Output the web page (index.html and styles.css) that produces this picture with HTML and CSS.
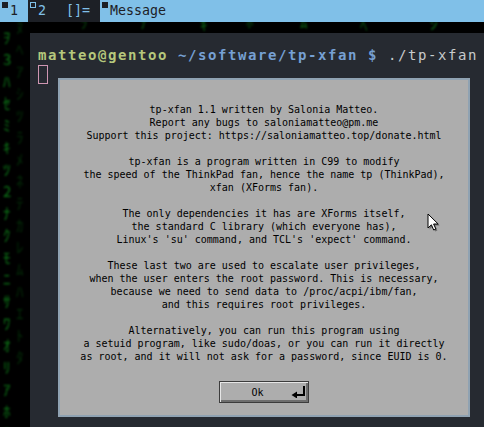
FILE: index.html
```html
<!DOCTYPE html>
<html>
<head>
<meta charset="utf-8">
<title>tp-xfan</title>
<link rel="stylesheet" href="styles.css">
</head>
<body>
<div class="bar">
  <div class="tag sel"><span class="ind fill"></span>1</div>
  <div class="tag"><span class="ind hollow"></span>2</div>
  <div class="layout">[]=</div>
  <div class="title"><span class="ind fill"></span>Message</div>
</div>
<div class="desk">
  <div class="matrix" aria-hidden="true">
    <span class="g g1">ｦ<br>3<br>ﾊ<br>ｾ<br>ﾐ<br>ｷ<br>ﾂ<br>2<br>ﾅ<br>ｸ<br>ﾓ<br>ﾆ<br>ｻ<br>ﾜ<br>ｵ<br>ﾘ<br>ｱ<br>ﾎ<br>ﾃ<br>ﾏ</span>
    <span class="g g2">ﾇ<br>ﾍ<br>ｱ<br>ｼ<br>ﾂ<br>ﾗ<br>ﾒ<br>ﾈ<br>ﾃ<br>ｶ<br>ﾚ<br>ﾑ<br>ﾊ<br>ｴ<br>ﾄ<br>ﾀ</span>
    <span class="g g3">ﾅ</span>
    <span class="g g4">ｷ</span>
    <span class="g g5">ﾑ</span>
    <span class="g g6">ﾍ</span>
    <span class="g g7">ｼ</span>
    <span class="g g8">ﾗ</span>
    <span class="g g9">ﾎ</span>
  </div>
  <div class="term">
    <div class="line"><span class="user">matteo@gentoo</span> <span class="path">~/software/tp-xfan $</span> <span class="cmd">./tp-xfan</span></div>
    <div class="line"><span class="cursor"></span></div>
  </div>
  <div class="dialog">
    <div class="msg">tp-xfan 1.1 written by Salonia Matteo.
Report any bugs to saloniamatteo@pm.me
Support this project: https://saloniamatteo.top/donate.html

tp-xfan is a program written in C99 to modify
the speed of the ThinkPad fan, hence the name tp (ThinkPad),
xfan (XForms fan).

The only dependencies it has are XForms itself,
the standard C library (which everyone has),
Linux's 'su' command, and TCL's 'expect' command.

These last two are used to escalate user privileges,
when the user enters the root password. This is necessary,
because we need to send data to /proc/acpi/ibm/fan,
and this requires root privileges.

Alternatively, you can run this program using
a setuid program, like sudo/doas, or you can run it directly
as root, and it will not ask for a password, since EUID is 0.</div>
    <div class="btnrow">
      <div class="btn"><span class="lbl">Ok</span><svg class="ret" width="15" height="12" viewBox="0 0 15 12"><path d="M12 0h2v10H6v2.5L0.5 9L6 5.5V8h6z" fill="#000"/></svg></div>
    </div>
  </div>
  <svg class="pointer" width="13" height="19" viewBox="0 0 13 19">
    <path d="M1.5 1.5v14l3.4-3.2 2.3 5.2 2.2-1-2.3-5h4.6z" fill="#3a3a3a" opacity="0.55" transform="translate(1 1)"/>
    <path d="M1 1v14l3.4-3.2 2.3 5.2 2.2-1-2.3-5h4.6z" fill="#fff" stroke="#000" stroke-width="1" stroke-linejoin="miter"/>
  </svg>
</div>
</body>
</html>
```

FILE: styles.css
```css
* { box-sizing: border-box; }
html, body { margin: 0; padding: 0; }
body {
  width: 484px;
  height: 427px;
  overflow: hidden;
  background: #000;
  font-family: "DejaVu Sans Mono", monospace;
}

.bar {
  display: flex;
  height: 22px;
  background: #80c0e8;
  font-size: 13.3px;
  line-height: 22px;
  color: #1d2026;
}
.tag, .layout, .title {
  position: relative;
  padding: 0 10px;
  white-space: pre;
}
.tag { background: #1d2026; color: #80c0e8; }
.tag.sel { background: #80c0e8; color: #1d2026; }
.layout { background: #1d2026; color: #80c0e8; }
.title { flex: 1; background: #80c0e8; color: #1d2026; }
.ind {
  position: absolute;
  left: 2px;
  top: 2px;
  width: 6px;
  height: 6px;
}
.tag.sel .ind.fill, .title .ind.fill { background: #1d2026; }
.ind.hollow { border: 1px solid #80c0e8; }

.desk {
  position: relative;
  height: 405px;
  padding: 11px 0 0 30px;
}
.matrix {
  position: absolute;
  inset: 0;
  overflow: hidden;
  font-family: "Noto Sans CJK JP", monospace;
  color: #0f9a1c;
  font-size: 15px;
  line-height: 22px;
}
.g { position: absolute; filter: blur(1.1px); opacity: 0.75; }
.g1 { left: 3px; top: 4px; color: #12a020; }
.g2 { left: 16px; top: -6px; color: #075a10; opacity: 0.5; }
.g3 { left: 140px; top: -11px; color: #117a1a; }
.g4 { left: 200px; top: -9px; color: #0d8e1b; }
.g5 { left: 300px; top: -11px; color: #10901e; }
.g6 { left: 360px; top: -8px; color: #0b7a17; }
.g7 { left: 430px; top: -10px; color: #13a022; }
.g8 { left: 80px; top: -11px; color: #0a5e12; }
.g9 { left: 246px; top: -12px; color: #0b6c15; }

.term {
  position: relative;
  height: 100%;
  background: #262a31;
  padding: 13px 0 0 8px;
  font-family: "DejaVu Sans Mono", monospace;
  font-weight: bold;
  font-size: 14px;
  letter-spacing: 1.57px;
  line-height: 19px;
  color: #c5c8c6;
}
.line { height: 19px; white-space: pre; }
.user { color: #b5c77c; }
.path { color: #76a0d3; }
.cmd { color: #c8cbcc; font-weight: normal; }
.cursor {
  display: inline-block;
  width: 10px;
  height: 19px;
  border: 1px solid #cf96b2;
  vertical-align: top;
}

.dialog {
  position: absolute;
  left: 58px;
  top: 56px;
  width: 412px;
  height: 339px;
  background: #adadad;
  border: 2px solid #8fa2b2;
  padding: 23px 0 0 0;
  display: flex;
  flex-direction: column;
  align-items: center;
}
.msg {
  font-family: "DejaVu Sans Mono", monospace;
  font-size: 10px;
  line-height: 13px;
  color: #000;
  text-align: center;
  white-space: pre;
}
.btnrow {
  margin-top: 18px;
  display: flex;
  justify-content: center;
  width: 100%;
}
.btn {
  position: relative;
  margin-left: -1px;
  width: 90px;
  height: 22px;
  border: 1px solid #3c3c3c;
  box-shadow: inset 1px 1px 0 #e6e6e6, inset -2px -2px 0 #6e6e6e;
  background: #adadad;
  font-family: "DejaVu Sans Mono", monospace;
  font-size: 10px;
  color: #000;
  display: flex;
  align-items: center;
}
.lbl { margin-left: 32px; }
.ret { position: absolute; right: 2px; top: 4px; }

.pointer {
  position: absolute;
  left: 427px;
  top: 191px;
}
```
